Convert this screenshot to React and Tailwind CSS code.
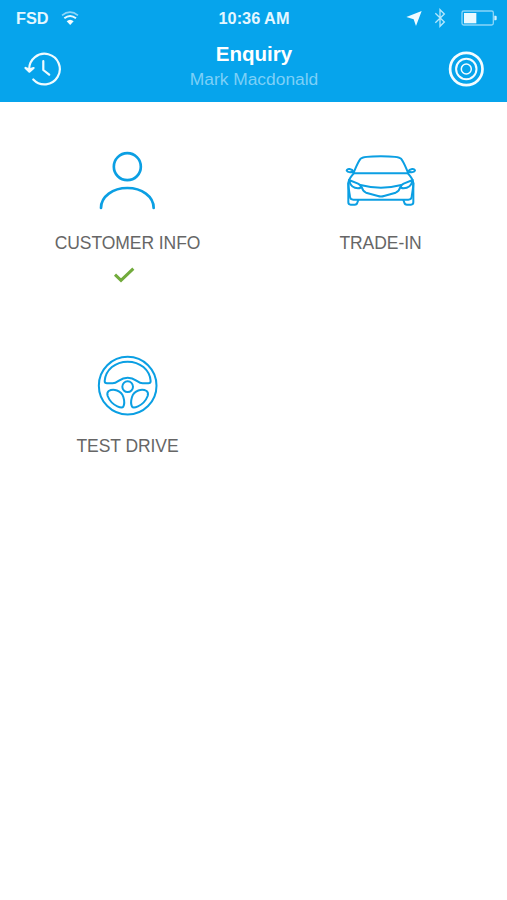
const WifiIcon = () => (
  <svg className="h-[14px] w-[18px]" viewBox="0 0 54 42" fill="none">
    <path d="M3 13Q27-6 51 13" stroke="#8fd6f8" strokeWidth="5" />
    <path d="M10 22Q27 8 45 22" stroke="#e8f9ff" strokeWidth="6" />
    <path d="M17 31Q27 21 38 31L27.500 42Z" fill="#f2fcff" />
  </svg>
);

const LocationIcon = () => (
  <svg className="h-[15px] w-4" viewBox="0 0 48 45" fill="#effbff">
    <path d="M47 0L30 45L23 25L1 18Z" />
  </svg>
);

const BluetoothIcon = () => (
  <svg className="h-5 w-3" viewBox="0 0 36 60" fill="none" stroke="#b5e7fc" strokeWidth="4">
    <path d="M4 16L31 42L18 55V5L31 18L4 44" />
  </svg>
);

const BatteryIcon = () => (
  <svg className="h-4 w-9" viewBox="0 0 108 48">
    <rect x="3" y="3" width="94" height="42" rx="5" fill="none" stroke="#8ad5f8" strokeWidth="4" />
    <rect x="9" y="9" width="37" height="31" fill="#e9f9ff" />
    <path d="M100 17h4q3 0 3 4v6q0 4-3 4h-4z" fill="#d4f2fe" />
  </svg>
);

const HistoryIcon = () => (
  <svg
    className="h-9 w-[38px]"
    viewBox="0 0 38 36"
    fill="none"
    stroke="#effbff"
    strokeWidth="2.2"
    strokeLinecap="round"
    strokeLinejoin="round"
  >
    <path d="M5.200 18.500A15.300 15.300 0 1 1 9.300 28.500" />
    <path d="M1.500 17L5.400 20.700L9.600 17L5.400 18.500Z" fill="#effbff" />
    <path d="M19.300 10.200V19L25.200 23.700" />
  </svg>
);

const TargetIcon = () => (
  <svg className="h-9 w-9" viewBox="0 0 36 36" fill="none" stroke="#f4fcff">
    <circle cx="18.300" cy="18" r="16.200" strokeWidth="2.7" />
    <circle cx="18.300" cy="18" r="10.200" strokeWidth="2" />
    <circle cx="18.300" cy="18" r="5" strokeWidth="1.5" />
  </svg>
);

const PersonIcon = () => (
  <svg className="mb-0.5 h-[59px] w-[57px]" viewBox="177 33 171 177" fill="none" stroke="#0b9fe3" strokeWidth="8" strokeLinecap="round">
    <circle cx="262" cy="80" r="40.5" />
    <path d="M183 204C183 169 219 144 262 144S341 169 341 204" />
  </svg>
);

const CarIcon = () => (
  <svg
    className="mb-0.5 h-[54px] w-[72px]"
    viewBox="45 42 216 162"
    fill="none"
    stroke="#0b9fe3"
    strokeWidth="6"
    strokeLinecap="round"
    strokeLinejoin="round"
  >
    <path d="M71 98C78 82 83 67 92 56C101 46 204 46 213 56C222 67 227 82 234 98" />
    <path d="M71 100H234" />
    <path d="M71 95C66 86 50 84 50 92C52 97 62 97 71 95" />
    <path d="M234 95C239 86 255 84 255 92C253 97 243 97 234 95" />
    <path d="M71 100C63 111 55 117 55 130C55 147 59 160 60 171Q61 179 70 179H235Q244 179 245 171C246 160 250 147 250 130C250 117 242 111 234 100" />
    <path d="M57 120L84 131C97 138 94 144 84 145C70 145 61 135 58 124" />
    <path d="M248 120L221 131C208 138 211 144 221 145C235 145 244 135 247 124" />
    <path d="M91 135Q153 151 214 135" />
    <path d="M95 141C98 152 101 155 108 158L144 168Q153 171 162 168L197 158C204 155 208 152 211 141" />
    <path d="M55 130V187Q55 194 62 194H74Q81 194 82 188L85 180" />
    <path d="M250 130V187Q250 194 243 194H231Q224 194 223 188L220 180" />
  </svg>
);

const WheelIcon = () => (
  <svg className="mt-[3px] h-[62px] w-[62px]" viewBox="81 30 186 186" fill="none" stroke="#0b9fe3" strokeWidth="6" strokeLinejoin="round">
    <circle cx="173" cy="122" r="86.5" />
    <circle cx="173" cy="125" r="16" />
    <path d="M104 108C107 74 136 50 173 50S239 74 242 108Q242 115 235 115H218C202 115 197 98 173 98S144 115 128 115H111Q104 115 104 108Z" />
    <path d="M116 138C130 130 154 136 160 156C164 169 162 181 160 185C157 189 151 188 142 184C127 177 118 166 113 153Q110 143 116 138Z" />
    <path d="M230 138C216 130 192 136 186 156C182 169 184 181 186 185C189 189 195 188 204 184C219 177 228 166 233 153Q236 143 230 138Z" />
  </svg>
);

const CheckIcon = () => (
  <svg className="mr-[7px] h-4 w-[22px]" viewBox="219 381 66 48" fill="none" stroke="#72ab3c" strokeWidth="9">
    <path d="M225 404L243 421L280 386" />
  </svg>
);

const items = [
  { label: 'CUSTOMER INFO', icon: PersonIcon, done: true },
  { label: 'TRADE-IN', icon: CarIcon },
  { label: 'TEST DRIVE', icon: WheelIcon },
];

const App = () => {
  return (
    <div className="min-h-screen bg-white font-['Liberation_Sans',sans-serif]">
      <header className="h-[102px] bg-[#06a4ec]">
        <div className="flex h-9 items-center justify-between pr-[10px] pl-4 text-[16.3px] font-bold text-[#e4f7ff]">
          <div className="flex flex-1 items-center gap-3">
            <span>FSD</span>
            <WifiIcon />
          </div>
          <span className="mr-[5px] whitespace-nowrap">10:36 AM</span>
          <div className="flex flex-1 items-center justify-end">
            <LocationIcon />
            <span className="w-3" />
            <BluetoothIcon />
            <span className="w-[15px]" />
            <BatteryIcon />
          </div>
        </div>
        <div className="flex h-[66px] items-center justify-between pr-[23px] pl-6">
          <HistoryIcon />
          <div className="mr-0.5 pb-1.5 text-center">
            <h1 className="text-[20.5px] leading-[26px] font-bold text-white">Enquiry</h1>
            <p className="text-[17.4px] leading-6 text-[#7dd0f7]">Mark Macdonald</p>
          </div>
          <TargetIcon />
        </div>
      </header>

      <main className="grid auto-rows-[203px] grid-cols-2 pt-12 pl-px">
        {items.map(({ label, icon: Icon, done }) => (
          <div key={label} className="flex flex-col items-center">
            <div className="flex h-[63px] items-center justify-center">
              <Icon />
            </div>
            <p className="mt-[18px] text-[17.5px] leading-6 tracking-[-0.06px] text-[#666]">{label}</p>
            {done && (
              <div className="mt-3">
                <CheckIcon />
              </div>
            )}
          </div>
        ))}
      </main>
    </div>
  );
};

export default App;
